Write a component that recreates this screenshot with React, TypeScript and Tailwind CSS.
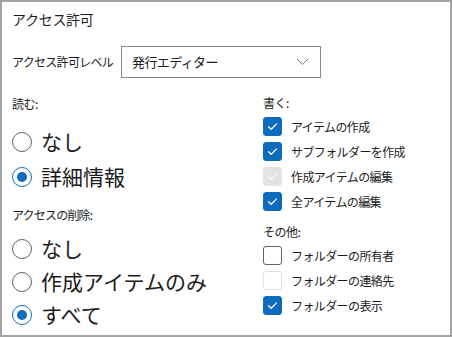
import React from "react";

const font = { fontFamily: '"Noto Sans CJK JP", "Noto Sans", sans-serif' };

function Radio({ label, checked }: { label: string; checked?: boolean }) {
    return (
        <div className="flex items-center gap-[9px] h-full">
            <span
                className={
                    checked
                        ? "flex size-[20px] items-center justify-center rounded-full border border-[#0f6cbd] bg-white"
                        : "flex size-[20px] items-center justify-center rounded-full border border-[#616161] bg-white"
                }
            >
                {checked && <span className="size-[10px] rounded-full bg-[#0f6cbd]" />}
            </span>
            <span className="text-[21px] leading-none text-[#1b1b1b]">{label}</span>
        </div>
    );
}

function Check({
    label,
    checked,
    disabled,
}: {
    label: string;
    checked?: boolean;
    disabled?: boolean;
}) {
    let box = "border border-[#616161] bg-white";
    if (checked && !disabled) box = "bg-[#0f6cbd] border border-[#0f6cbd]";
    if (checked && disabled) box = "bg-[#e3e3e3] border border-[#e3e3e3]";
    if (!checked && disabled) box = "bg-white border border-[#e0e0e0]";
    return (
        <div className="flex items-center gap-[9px] h-[25px]">
            <span className={`flex size-[19px] items-center justify-center rounded-[3px] ${box}`}>
                {checked && (
                    <svg width="19" height="19" viewBox="0 0 19 19" fill="none">
                        <path
                            d="M5 9.8 L8 12.6 L14 6.6"
                            stroke={disabled ? "#f6f6f6" : "#ffffff"}
                            strokeWidth="1.4"
                            strokeLinecap="round"
                            strokeLinejoin="round"
                        />
                    </svg>
                )}
            </span>
            <span className="text-[12px] leading-none tracking-[-0.6px] text-[#1b1b1b]">{label}</span>
        </div>
    );
}

export default function App() {
    return (
        <div
            style={font}
            className="w-[452px] h-[337px] border-2 border-[#a3a3a3] bg-white text-[#1b1b1b] overflow-hidden"
        >
            <div className="h-[34px] flex items-center pl-[10px] text-[14px] tracking-[-0.3px]">
                アクセス許可
            </div>
            <div className="mt-[10px] h-[32px] flex items-center pl-[10px]">
                <span className="w-[109px] text-[12px] tracking-[-0.7px]">アクセス許可レベル</span>
                <div className="w-[200px] h-[32px] flex items-center justify-between border border-[#8a8a8a] pl-[10px] pr-[11px]">
                    <span className="text-[13px] tracking-[-0.6px]">発行エディター</span>
                    <svg width="13" height="8" viewBox="0 0 13 8" fill="none">
                        <path d="M1 1 L6.5 6.5 L12 1" stroke="#7a7a7a" strokeWidth="1" />
                    </svg>
                </div>
            </div>
            <div className="flex">
                <div className="w-[260px] pl-[10px]">
                    <div className="mt-[16px] h-[20px] flex items-center text-[12px] tracking-[-0.5px]">読む:</div>
                    <div className="mt-[10px]">
                        <div className="h-[35px]">
                            <Radio label="なし" />
                        </div>
                        <div className="h-[35px]">
                            <Radio label="詳細情報" checked />
                        </div>
                    </div>
                    <div className="mt-[11px] h-[20px] flex items-center text-[12px] tracking-[-0.8px]">
                        アクセスの削除:
                    </div>
                    <div className="mt-[7px]">
                        <div className="h-[33px]">
                            <Radio label="なし" />
                        </div>
                        <div className="h-[33px]">
                            <Radio label="作成アイテムのみ" />
                        </div>
                        <div className="h-[33px]">
                            <Radio label="すべて" checked />
                        </div>
                    </div>
                </div>
                <div className="flex-1 pl-[1px]">
                    <div className="mt-[15px] h-[20px] flex items-center text-[12px] tracking-[-0.5px]">書く:</div>
                    <div className="mt-[1px]">
                        <Check label="アイテムの作成" checked />
                        <Check label="サブフォルダーを作成" checked />
                        <Check label="作成アイテムの編集" checked disabled />
                        <Check label="全アイテムの編集" checked />
                    </div>
                    <div className="mt-[8px] h-[20px] flex items-center text-[12px] tracking-[-0.5px]">その他:</div>
                    <div className="mt-[1px]">
                        <Check label="フォルダーの所有者" />
                        <Check label="フォルダーの連絡先" disabled />
                        <Check label="フォルダーの表示" checked />
                    </div>
                </div>
            </div>
        </div>
    );
}
